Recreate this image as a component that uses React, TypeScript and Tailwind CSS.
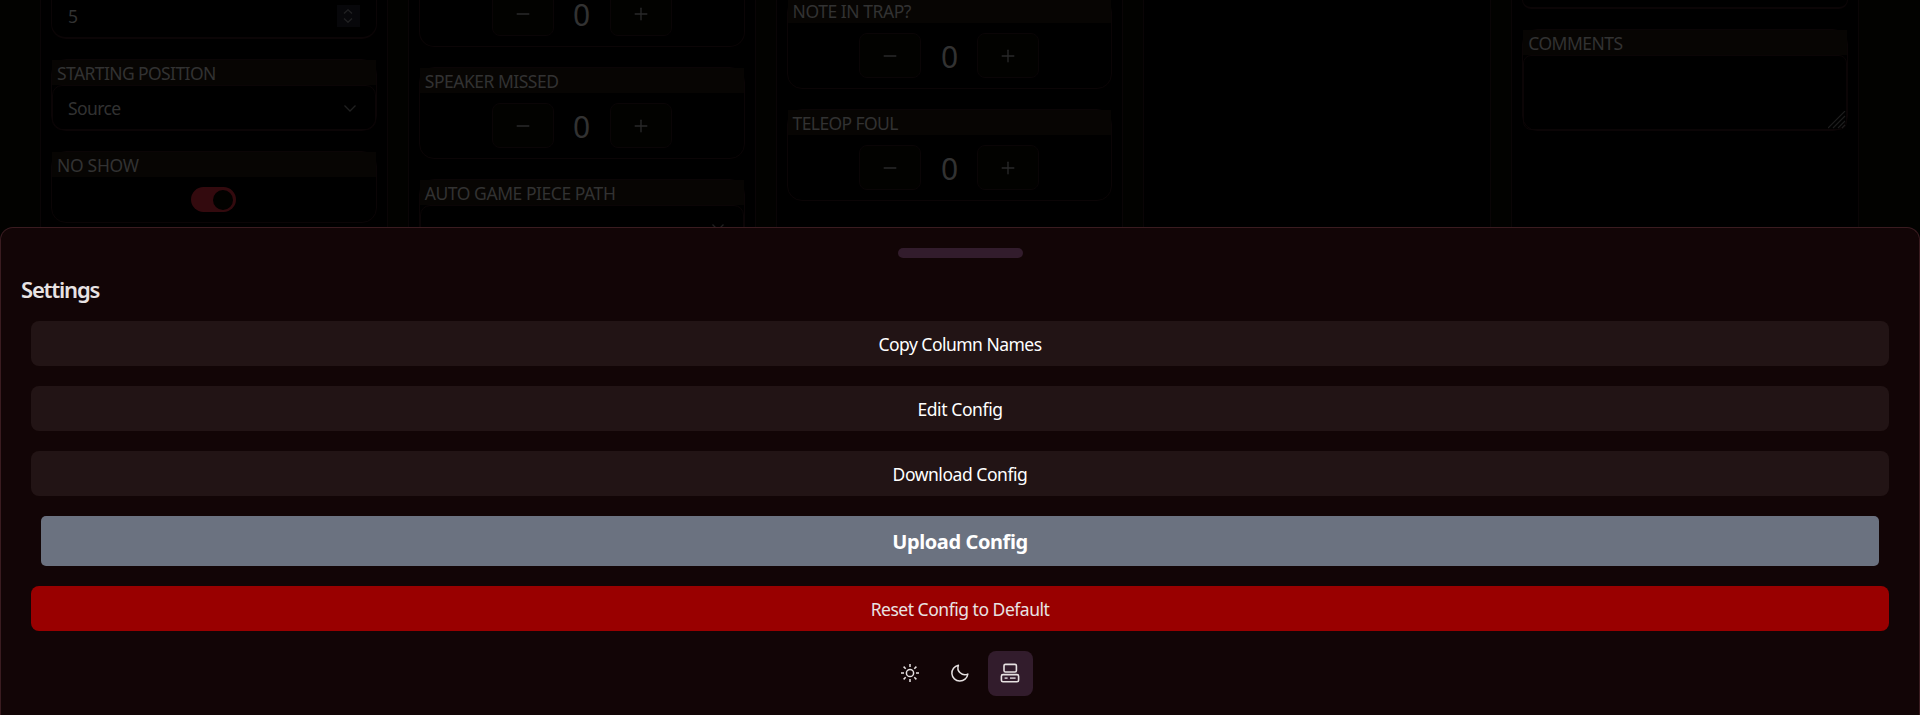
import React from "react";
import { Minus, Plus } from "lucide-react";

const label =
  "flex h-[25px] shrink-0 items-center bg-[#070503] pl-[5px] pt-[2px] text-[17.5px] leading-[25px] text-[#323232] whitespace-nowrap";

function T({ children, className = "" }: { children: React.ReactNode; className?: string }) {
  return <span className={"block whitespace-nowrap " + className}>{children}</span>;
}

function Field({
  title,
  tracking,
  className = "",
  children,
}: {
  title: string;
  tracking: string;
  className?: string;
  children?: React.ReactNode;
}) {
  return (
    <div className={"flex shrink-0 flex-col rounded-[15px] border border-[#0b0506] " + className}>
      <div className={label}>
        <T className={tracking}>{title}</T>
      </div>
      {children}
    </div>
  );
}

function Counter() {
  const btn =
    "flex h-[45px] w-[62px] items-center justify-center rounded-[8px] border border-[#0a0506] bg-[#020200] text-[#2a2a2a]";
  return (
    <div className="flex items-center justify-center pt-[10px]">
      <div className={btn}>
        <Minus size={20} strokeWidth={1.6} />
      </div>
      <div className="h-[45px] w-[56px] pt-[9px] text-center text-[30px] leading-[30px] text-[#323232]">0</div>
      <div className={btn}>
        <Plus size={20} strokeWidth={1.6} />
      </div>
    </div>
  );
}

function Column({ children, className = "" }: { children?: React.ReactNode; className?: string }) {
  return (
    <section className={"flex h-[228px] min-w-0 flex-col gap-[20px] border-x border-[#0a0506] bg-black px-[10px] " + className}>
      {children}
    </section>
  );
}

function Chevron() {
  return (
    <svg width="14" height="8" viewBox="0 0 14 8" fill="none" stroke="#202020" strokeWidth="1.3">
      <path d="M1.5 1.5 7 7l5.5-5.5" />
    </svg>
  );
}

function SunIcon() {
  return (
    <svg width="20" height="20" viewBox="0 0 20 20" fill="none" stroke="#e6e1e1" strokeWidth="1.5">
      <circle cx="10" cy="10" r="3.6" />
      <path d="M10 1v3M10 16v3M1 10h3M16 10h3M3.6 3.6l2.1 2.1M14.3 14.3l2.1 2.1M3.6 16.4l2.1-2.1M14.3 5.7l2.1-2.1" />
    </svg>
  );
}

function MoonIcon() {
  return (
    <svg width="20" height="20" viewBox="0 0 20 20" fill="none" stroke="#e6e1e1" strokeWidth="1.5" strokeLinejoin="round">
      <path d="M8.4 2.2A8 8 0 1 0 17.8 11.1 7 7 0 0 1 8.4 2.2Z" />
    </svg>
  );
}

function DesktopIcon() {
  return (
    <svg width="20" height="20" viewBox="0 0 20 20" fill="none" stroke="#e6e1e1" strokeWidth="1.6">
      <rect x="4" y="1.4" width="12.4" height="7.6" rx="1.4" />
      <rect x="1.4" y="11.6" width="17.2" height="7.2" rx="1.6" />
      <path d="M4.6 15.2h3M10 15.2h5.6" stroke="#bdb3ba" strokeWidth="1.8" />
    </svg>
  );
}

export default function App() {
  const action = "mx-[10px] flex h-[45px] shrink-0 items-center justify-center rounded-[8px] pt-[2px] text-[17.5px]";
  const theme = "flex size-[45px] items-center justify-center rounded-[8px] pb-[2px]";
  return (
    <div className="flex h-[715px] flex-col overflow-hidden bg-[#020200] font-['Noto_Sans','Open_Sans',sans-serif]">
      <main className="grid h-[227px] w-[1859px] shrink-0 grid-cols-5 gap-[20px] overflow-hidden pl-[40px]">
        <Column>
          <div className="flex h-[39px] items-start justify-between rounded-b-[15px] border border-b-2 border-t-0 border-[#0b0506] px-[16px]">
            <T className="pt-[4px] text-[17.5px] leading-[25px] text-[#323232]">5</T>
            <div className="mt-[5px] flex h-[22px] w-[23px] flex-col items-center justify-center gap-[4px] bg-[#07070a]">
              <svg width="10" height="5" viewBox="0 0 10 5" fill="none" stroke="#202022" strokeWidth="1.4">
                <path d="M1 4.5 5 .8l4 3.7" />
              </svg>
              <svg width="10" height="5" viewBox="0 0 10 5" fill="none" stroke="#202022" strokeWidth="1.4">
                <path d="M1 .5 5 4.2 9 .5" />
              </svg>
            </div>
          </div>
          <Field title="STARTING POSITION" tracking="tracking-[-0.6px]" className="h-[72px]">
            <div className="flex flex-1 items-center justify-between rounded-[10px] border border-[#0b0506] pl-[15px] pr-[18px]">
              <T className="pt-[2px] text-[17.5px] tracking-[-0.6px] text-[#323232]">Source</T>
              <Chevron />
            </div>
          </Field>
          <Field title="NO SHOW" tracking="tracking-[-0.3px]" className="h-[72px]">
            <div className="flex justify-center pt-[10px]">
              <div className="flex h-[25px] w-[45px] items-center justify-end rounded-full bg-[#330a0e] pr-[3px]">
                <div className="size-[20px] rounded-full bg-[#020200]" />
              </div>
            </div>
          </Field>
        </Column>
        <Column>
          <div className="-mt-[20px] h-[67px] shrink-0 rounded-b-[15px] border border-t-0 border-[#0b0506] pt-[1px]">
            <Counter />
          </div>
          <Field title="SPEAKER MISSED" tracking="tracking-[-0.5px]" className="h-[92px]">
            <Counter />
          </Field>
          <Field title="AUTO GAME PIECE PATH" tracking="tracking-[-0.45px]" className="h-[92px]">
            <div className="flex flex-1 items-start justify-end rounded-[10px] border border-[#0b0506] pr-[18px] pt-[17px]">
              <Chevron />
            </div>
          </Field>
        </Column>
        <Column>
          <Field title="NOTE IN TRAP?" tracking="tracking-[-0.45px]" className="-mt-[3px] h-[92px]">
            <Counter />
          </Field>
          <Field title="TELEOP FOUL" tracking="tracking-[-0.6px]" className="h-[92px]">
            <Counter />
          </Field>
        </Column>
        <Column />
        <Column>
          <div className="h-[9px] shrink-0 rounded-b-[9px] border border-b-2 border-t-0 border-[#0b0506]" />
          <Field title="COMMENTS" tracking="tracking-[-0.5px]" className="h-[102px]">
            <div className="flex flex-1 items-end justify-end rounded-[8px] border border-[#0b0506]">
              <svg width="18" height="18" viewBox="0 0 18 18" stroke="#1e1e1e" strokeWidth="1.1">
                <path d="M0 17 17 0M5 17 17 5M10 17l7-7M14 17l3-3" />
              </svg>
            </div>
          </Field>
        </Column>
      </main>

      <div className="flex h-[488px] shrink-0 flex-col rounded-t-[13px] border border-b-0 border-[#3a1c20] bg-[#120506] px-[20px] pt-[20px]">
        <div className="h-[10px] w-[125px] shrink-0 self-center rounded-full bg-[#321c2c]" />
        <h2 className="h-[63px] shrink-0 pt-[19px] text-[22px] font-semibold leading-[24px] tracking-[-1.2px] text-[#e8e3e3]">
          Settings
        </h2>
        <div className="flex flex-col gap-[20px]">
          <button className={action + " bg-[#221415] text-white"}>
            <T className="tracking-[-0.52px]">Copy Column Names</T>
          </button>
          <button className={action + " bg-[#221415] text-white"}>
            <T className="tracking-[-0.4px]">Edit Config</T>
          </button>
          <button className={action + " bg-[#221415] text-white"}>
            <T className="tracking-[-0.45px]">Download Config</T>
          </button>
          <button className="mx-[20px] flex h-[50px] shrink-0 items-center justify-center rounded-[5px] bg-[#6b7280] pt-[2px] text-[20px] font-bold text-white">
            <T className="tracking-[-0.4px]">Upload Config</T>
          </button>
          <button className={action + " bg-[#990000] text-[#e8e3e3]"}>
            <T className="tracking-[-0.48px]">Reset Config to Default</T>
          </button>
          <div className="flex justify-center gap-[5px]">
            <button className={theme}>
              <SunIcon />
            </button>
            <button className={theme}>
              <MoonIcon />
            </button>
            <button className={theme + " bg-[#321c2c]"}>
              <DesktopIcon />
            </button>
          </div>
        </div>
      </div>
    </div>
  );
}
